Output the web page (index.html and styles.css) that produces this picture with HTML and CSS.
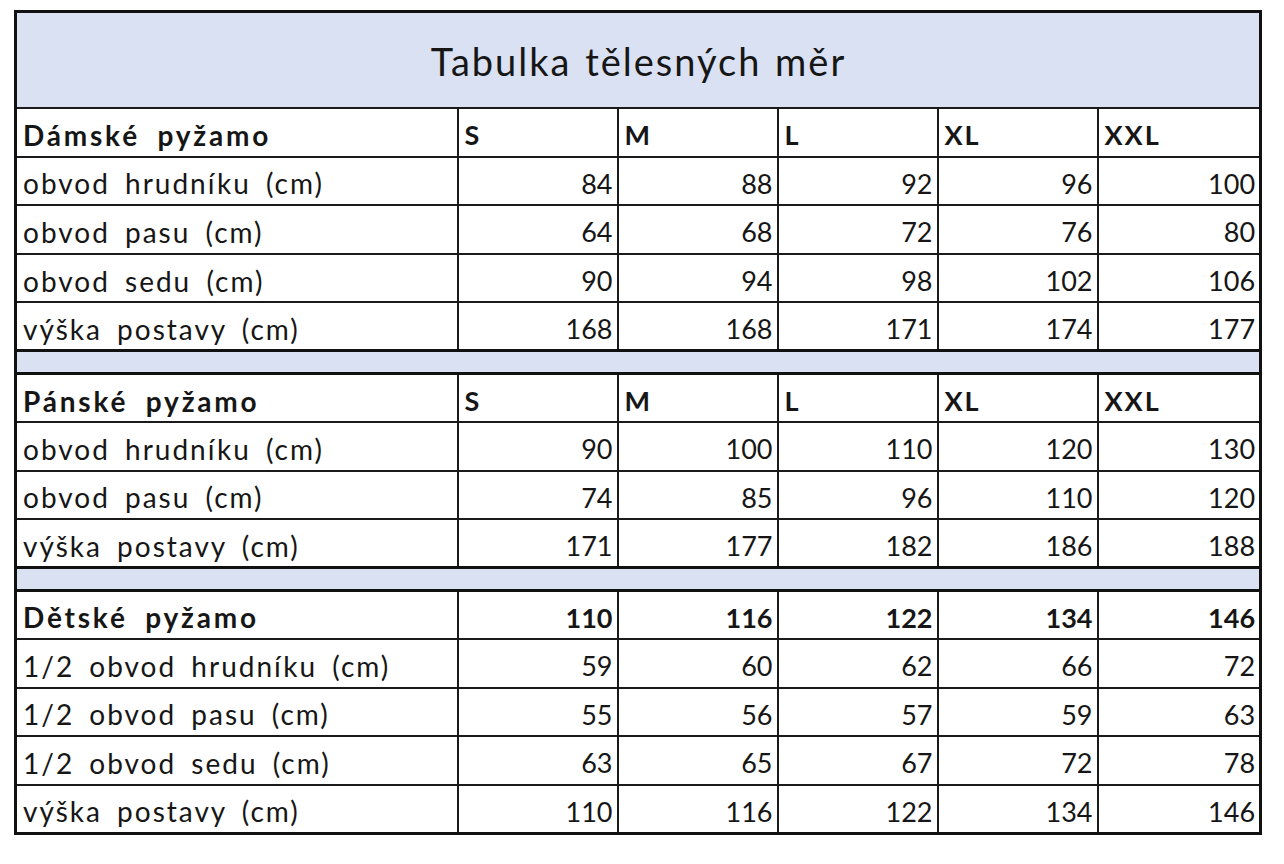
FILE: index.html
```html
<!DOCTYPE html>
<html lang="cs">
<head>
<meta charset="utf-8">
<title>Tabulka tělesných měr</title>
<link rel="stylesheet" href="styles.css">
</head>
<body>
<table class="sizes">
  <colgroup>
    <col class="c-label"><col class="c-size"><col class="c-size"><col class="c-size"><col class="c-size"><col class="c-size-last">
  </colgroup>
  <tbody>
    <tr class="title-row"><td colspan="6">Tabulka tělesných měr</td></tr>

    <tr class="head"><td class="lbl">Dámské pyžamo</td><td>S</td><td>M</td><td>L</td><td>XL</td><td>XXL</td></tr>
    <tr><td class="lbl">obvod hrudníku (cm)</td><td class="n">84</td><td class="n">88</td><td class="n">92</td><td class="n">96</td><td class="n">100</td></tr>
    <tr><td class="lbl">obvod pasu (cm)</td><td class="n">64</td><td class="n">68</td><td class="n">72</td><td class="n">76</td><td class="n">80</td></tr>
    <tr><td class="lbl">obvod sedu (cm)</td><td class="n">90</td><td class="n">94</td><td class="n">98</td><td class="n">102</td><td class="n">106</td></tr>
    <tr><td class="lbl">výška postavy (cm)</td><td class="n">168</td><td class="n">168</td><td class="n">171</td><td class="n">174</td><td class="n">177</td></tr>

    <tr class="gap"><td colspan="6"></td></tr>

    <tr class="head"><td class="lbl">Pánské pyžamo</td><td>S</td><td>M</td><td>L</td><td>XL</td><td>XXL</td></tr>
    <tr><td class="lbl">obvod hrudníku (cm)</td><td class="n">90</td><td class="n">100</td><td class="n">110</td><td class="n">120</td><td class="n">130</td></tr>
    <tr><td class="lbl">obvod pasu (cm)</td><td class="n">74</td><td class="n">85</td><td class="n">96</td><td class="n">110</td><td class="n">120</td></tr>
    <tr><td class="lbl">výška postavy (cm)</td><td class="n">171</td><td class="n">177</td><td class="n">182</td><td class="n">186</td><td class="n">188</td></tr>

    <tr class="gap"><td colspan="6"></td></tr>

    <tr class="head"><td class="lbl">Dětské pyžamo</td><td class="n">110</td><td class="n">116</td><td class="n">122</td><td class="n">134</td><td class="n">146</td></tr>
    <tr><td class="lbl">1/2 obvod hrudníku (cm)</td><td class="n">59</td><td class="n">60</td><td class="n">62</td><td class="n">66</td><td class="n">72</td></tr>
    <tr><td class="lbl">1/2 obvod pasu (cm)</td><td class="n">55</td><td class="n">56</td><td class="n">57</td><td class="n">59</td><td class="n">63</td></tr>
    <tr><td class="lbl">1/2 obvod sedu (cm)</td><td class="n">63</td><td class="n">65</td><td class="n">67</td><td class="n">72</td><td class="n">78</td></tr>
    <tr><td class="lbl">výška postavy (cm)</td><td class="n">110</td><td class="n">116</td><td class="n">122</td><td class="n">134</td><td class="n">146</td></tr>
  </tbody>
</table>
</body>
</html>
```
FILE: styles.css
```css
html, body {
  margin: 0;
  padding: 0;
  background: #ffffff;
}

body {
  padding: 10px 0 0 14px;
  font-family: Lato, "Noto Sans", "DejaVu Sans", sans-serif;
  color: #161616;
}

.sizes {
  border-collapse: collapse;
  table-layout: fixed;
  width: 1247px;
  border: 3px solid #111111;
}

.c-label { width: 442px; }
.c-size { width: 160px; }
.c-size-last { width: 163px; }

.sizes td {
  border: 2px solid #1a1a1a;
  padding: 5px 5px 0 6px;
  height: 48.6px;
  box-sizing: border-box;
  font-size: 27px;
  line-height: 1;
  vertical-align: middle;
  white-space: nowrap;
  overflow: hidden;
}

.sizes td.lbl {
  font-size: 28px;
  letter-spacing: 2px;
  word-spacing: 6px;
  padding-left: 6px;
}

.sizes td.n {
  text-align: right;
  padding-right: 4px;
}

.title-row td {
  height: 96.5px;
  background: #d9e1f2;
  text-align: center;
  font-size: 38px;
  letter-spacing: 2px;
  word-spacing: 2px;
  padding-top: 2px;
}

.head td {
  font-weight: 700;
  letter-spacing: 2px;
}

.head td.n {
  letter-spacing: 0;
}

.head td.lbl {
  letter-spacing: 2.8px;
  word-spacing: 8px;
}

.gap td {
  height: 22.5px;
  padding: 0;
  background: #d9e1f2;
  border-top: 3px solid #111111;
  border-bottom: 3px solid #111111;
}
```
